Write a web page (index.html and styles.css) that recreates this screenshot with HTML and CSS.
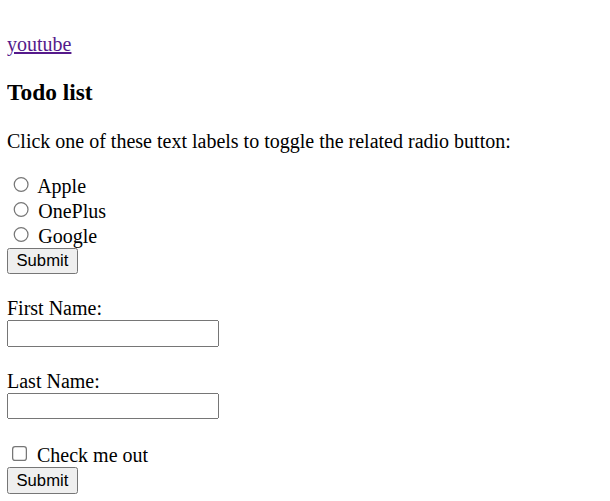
FILE: index.html
```html
<!DOCTYPE html>
<html>
<head>
<meta charset="utf-8">
<link rel="stylesheet" href="styles.css">
</head>
<body class="page">
<br>
<a href="#" class="link">youtube</a>
<h3>Todo list</h3>
<p>Click one of these text labels to toggle the related radio button:</p>
<form>
<input type="radio" id="apple" name="phone">
<label for="apple">Apple</label><br>
<input type="radio" id="oneplus" name="phone">
<label for="oneplus">OnePlus</label><br>
<input type="radio" id="google" name="phone">
<label for="google">Google</label><br>
<button type="button" class="btn">Submit</button>
</form>
<br>
<form>
<label for="fname">First Name:</label><br>
<input type="text" id="fname" class="field"><br><br>
<label for="lname">Last Name:</label><br>
<input type="text" id="lname" class="field"><br><br>
<input type="checkbox" id="check">
<label for="check">Check me out</label><br>
<button type="button" class="btn">Submit</button>
</form>
</body>
</html>
```
FILE: styles.css
```css
html {
  zoom: 1.25;
}
.page {
  font-family: "Liberation Serif", serif;
  margin: 8px 8px 8px 5.6px;
}
.link {
  color: #551a8b;
}
.btn {
  font-family: "Liberation Sans", Arial, sans-serif;
}
.field {
  font-family: "Liberation Sans", Arial, sans-serif;
  box-sizing: border-box;
  width: 169.6px;
}
```
